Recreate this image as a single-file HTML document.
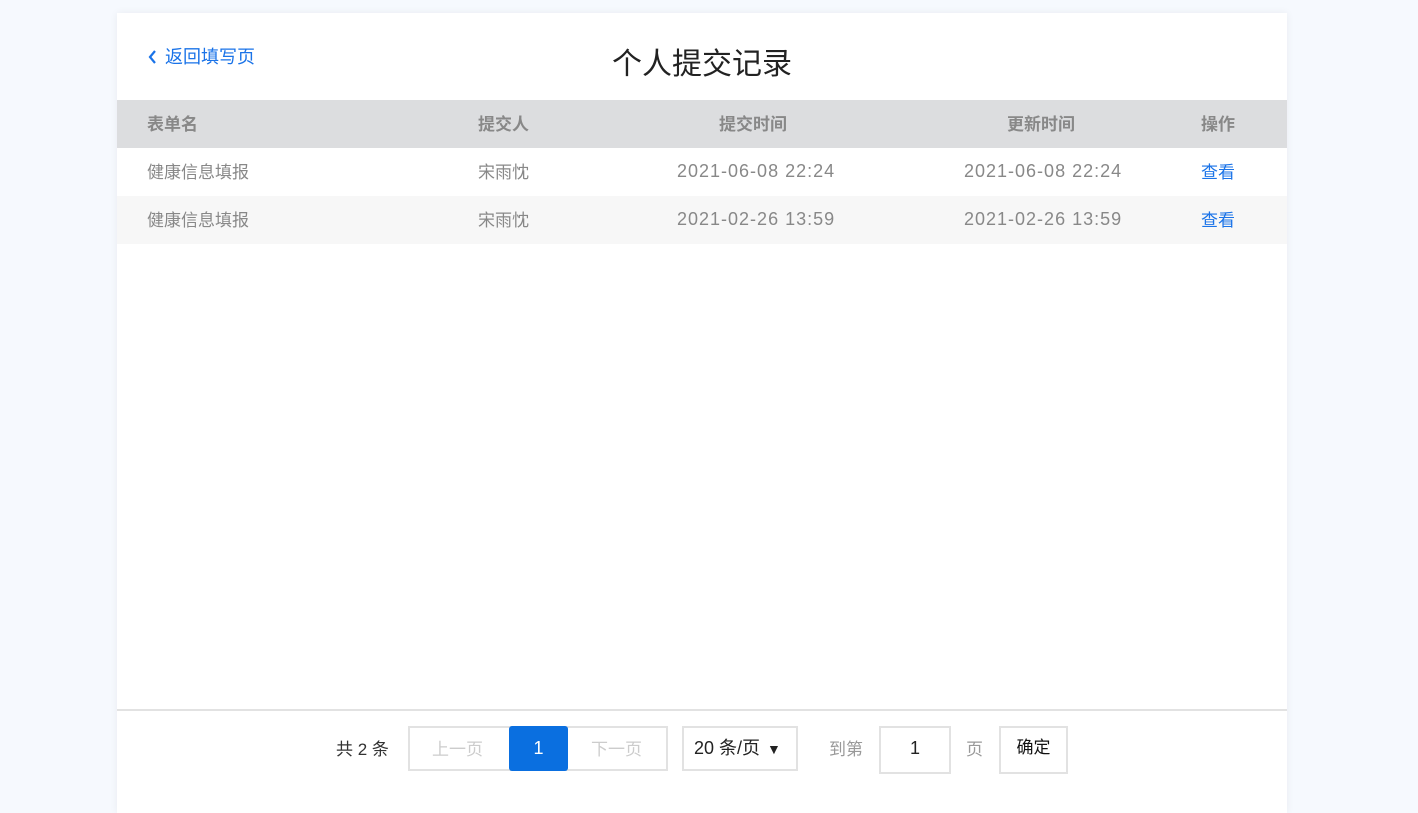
<!DOCTYPE html>
<html><head><meta charset="utf-8"><style>
body{margin:0;width:1418px;height:784px;background:#f6f9fe;font-family:"Liberation Sans","Noto Sans CJK SC",sans-serif;overflow:hidden;position:relative}
.card{position:absolute;left:117px;top:13px;width:1170px;height:800px;background:#fff;box-shadow:0 0 8px rgba(0,0,0,.06)}
.a{position:absolute;white-space:nowrap}
.back{left:30px;top:30px;color:#1a73e8;font-size:18px}
.title{left:495px;top:26px;font-size:30px;color:#222}
.hd{position:absolute;left:0;top:87px;width:1170px;height:48px;background:#dcdddf}
.r2{position:absolute;left:0;top:183px;width:1170px;height:48px;background:#f7f7f7}
.h{font-weight:bold;color:#888;font-size:17px}
.c{color:#888;font-size:17px}
.d{color:#888;font-size:18px;letter-spacing:1px}
.bl{color:#1a73e8;font-size:17px}
.foot{position:absolute;left:0;top:696px;width:1170px;height:2px;background:#e2e2e2}
.bx{position:absolute;box-sizing:border-box;border:2px solid #e2e2e2;font-size:17px;text-align:center;line-height:41px;height:45px}
</style></head><body>
<div class="card">
<div class="a back"><svg width="10" height="16" viewBox="0 0 10 16" style="vertical-align:-2px;margin-right:8px"><path d="M8 2L3 8l5 6" stroke="#1a73e8" stroke-width="2.2" fill="none"/></svg>返回填写页</div>
<div class="a title">个人提交记录</div>
<div class="hd"></div><div class="r2"></div>
<div class="a h" style="left:30px;top:97px">表单名</div>
<div class="a h" style="left:361px;top:97px">提交人</div>
<div class="a h" style="left:602px;top:97px">提交时间</div>
<div class="a h" style="left:890px;top:97px">更新时间</div>
<div class="a h" style="left:1084px;top:97px">操作</div>
<div class="a c" style="left:30px;top:145px">健康信息填报</div>
<div class="a c" style="left:361px;top:145px">宋雨忱</div>
<div class="a d" style="left:560px;top:148px">2021-06-08 22:24</div>
<div class="a d" style="left:847px;top:148px">2021-06-08 22:24</div>
<div class="a bl" style="left:1084px;top:145px">查看</div>
<div class="a c" style="left:30px;top:193px">健康信息填报</div>
<div class="a c" style="left:361px;top:193px">宋雨忱</div>
<div class="a d" style="left:560px;top:196px">2021-02-26 13:59</div>
<div class="a d" style="left:847px;top:196px">2021-02-26 13:59</div>
<div class="a bl" style="left:1084px;top:193px">查看</div>
<div class="foot"></div>
</div>
<div class="a" style="left:336px;top:735px;font-size:17px;color:#333">共 2 条</div>
<div class="bx" style="left:408px;top:726px;width:260px"></div>
<div class="a" style="left:432px;top:735px;font-size:17px;color:#ccc">上一页</div>
<div class="a" style="left:509px;top:726px;width:59px;height:45px;background:#0a6fe0;border-radius:3px;color:#fff;font-size:18px;text-align:center;line-height:45px">1</div>
<div class="a" style="left:591px;top:735px;font-size:17px;color:#ccc">下一页</div>
<div class="bx" style="left:682px;top:726px;width:116px;text-align:left;padding-left:10px;color:#222;font-size:18px;line-height:40px">20 条/页 <span style="font-size:14px;margin-left:2px">▼</span></div>
<div class="a" style="left:829px;top:735px;font-size:17px;color:#999">到第</div>
<div class="bx" style="left:879px;top:726px;width:72px;height:48px;color:#222;font-size:18px">1</div>
<div class="a" style="left:966px;top:735px;font-size:17px;color:#999">页</div>
<div class="bx" style="left:999px;top:726px;width:69px;height:48px;color:#111;line-height:40px">确定</div>
</body></html>
